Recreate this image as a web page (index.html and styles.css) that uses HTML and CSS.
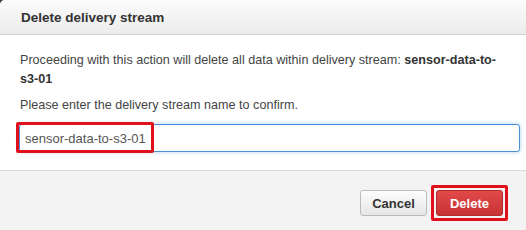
FILE: index.html
```html
<!DOCTYPE html>
<html lang="en">
<head>
    <meta charset="UTF-8">
    <meta name="viewport" content="width=device-width, initial-scale=1.0">
    <title>Delete delivery stream</title>
    <link rel="stylesheet" href="styles.css">
</head>
<body>
    <div class="modal">
        <div class="modal-header">Delete delivery stream</div>

        <div class="modal-body">
            <p class="message">Proceeding with this action will delete all data within delivery stream: <b>sensor-data-to-s3-01</b></p>
            <p class="message confirm">Please enter the delivery stream name to confirm.</p>
            <div class="input-wrap">
                <input type="text" class="name-input" value="sensor-data-to-s3-01">
                <span class="highlight"></span>
            </div>
        </div>

        <div class="modal-footer">
            <button type="button" class="btn btn-cancel">Cancel</button>
            <button type="button" class="btn btn-delete">Delete</button>
        </div>
    </div>
</body>
</html>
```

FILE: styles.css
```css
html, body {
    margin: 0;
    padding: 0;
    height: 100%;
    background-color: #3a3a3a;
}
body {
    font-family: "Liberation Sans", Arial, sans-serif;
    font-size: 12.6px;
    color: #444;
}
.modal {
    display: flex;
    flex-direction: column;
    height: 100%;
    background-color: #fff;
    border-top-left-radius: 5px;
    overflow: hidden;
}
.modal-header {
    height: 34px;
    line-height: 35px;
    padding-left: 21px;
    font-size: 13.5px;
    font-weight: bold;
    color: #333;
    background: linear-gradient(#fbfbfb, #ececec);
    border-bottom: 1px solid #cfcfcf;
}
.modal-body {
    padding: 16px 20px 18px 20px;
}
.message {
    margin: 0;
    line-height: 19px;
}
.message b {
    color: #333;
}
.confirm {
    margin-top: 7px;
}
.input-wrap {
    position: relative;
    margin-top: 9px;
    margin-left: -1px;
    margin-right: -14px;
}
.name-input {
    display: block;
    width: 100%;
    height: 28px;
    box-sizing: border-box;
    padding: 0 5px;
    font-family: inherit;
    font-size: 13px;
    color: #555;
    border: 1px solid #4a8fd8;
    border-radius: 3px;
    box-shadow: 0 0 4px rgba(74, 143, 216, 0.45);
    outline: none;
}
.highlight {
    position: absolute;
    left: -3px;
    top: -2px;
    width: 132px;
    height: 25px;
    border: 3px solid #e1111c;
    border-radius: 2px;
}
.modal-footer {
    flex: 1;
    box-sizing: border-box;
    padding: 19px 23px 0 0;
    background-color: #f3f3f3;
    border-top: 1px solid #dcdcdc;
    display: flex;
    align-items: flex-start;
    justify-content: flex-end;
    gap: 9px;
}
.btn {
    position: relative;
    width: 67px;
    height: 26px;
    font-family: inherit;
    font-size: 13px;
    font-weight: bold;
    border-radius: 3px;
    cursor: pointer;
}
.btn-cancel {
    color: #333;
    background: linear-gradient(#fdfdfd, #e6e6e6);
    border: 1px solid #bcbcbc;
}
.btn-delete {
    color: #fff;
    background: linear-gradient(#e24a4a, #c73232);
    border: 1px solid #b52a2a;
}
.btn-delete::after {
    content: "";
    position: absolute;
    left: -6px;
    top: -6px;
    right: -6px;
    bottom: -6px;
    border: 3px solid #e1111c;
    border-radius: 2px;
}
```
